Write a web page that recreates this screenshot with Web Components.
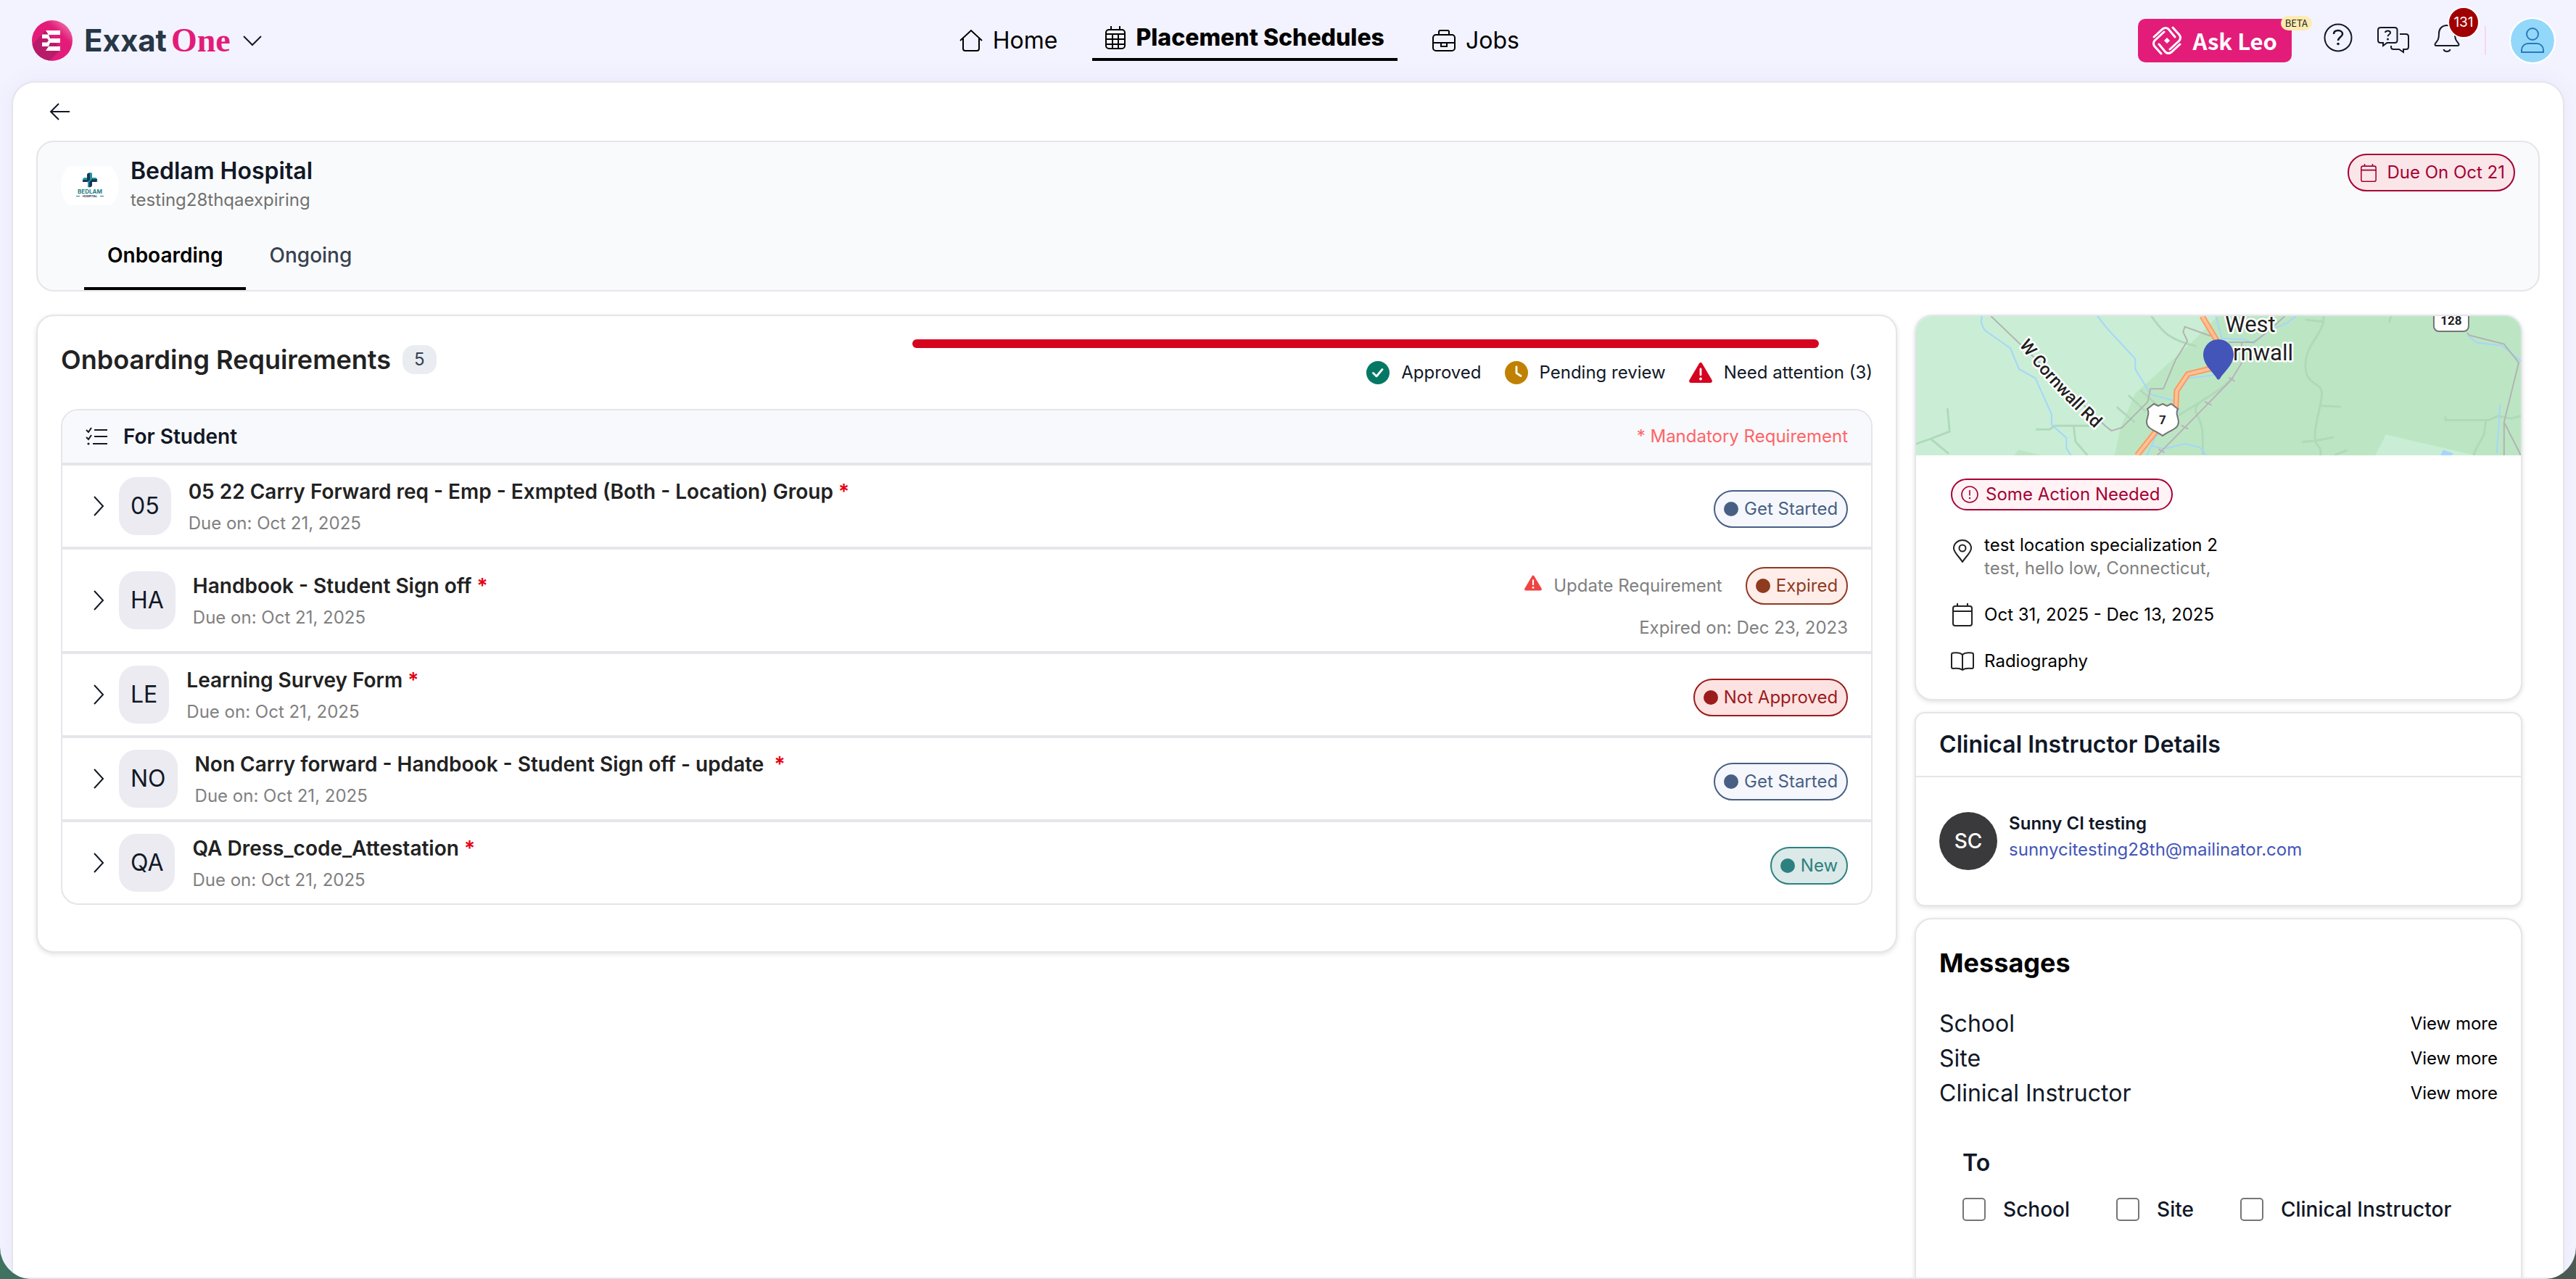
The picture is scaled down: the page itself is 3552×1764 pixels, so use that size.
<!DOCTYPE html>
<html lang="en">
<head>
<meta charset="utf-8">
<title>Exxat One - Placement Schedules</title>
<style>
  html, body {
    height: 100%;
  }

  body {
    margin: 0;
    overflow: hidden;
    background: linear-gradient(90deg, #3f7260 0%, #47705f 50%, #4d5a54 100%);
    color: #111827;
    font-family: Inter, "Liberation Sans", sans-serif;
    font-size: 24px;
    line-height: 32px;
    --line: #e5e5ea;
    --muted: #808080;
    --danger: #a50034;
    --brand: #e31c79;
  }
</style>
</head>
<body>
<exxat-app>
  <app-header slot="header"></app-header>
  <site-banner name="Bedlam Hospital" subtitle="testing28thqaexpiring" due="Due On Oct 21"></site-banner>
  <page-columns>
    <requirements-card slot="main" heading="Onboarding Requirements" count="5">
      <requirement-row initials="05" name="05 22 Carry Forward req - Emp - Exmpted (Both - Location) Group" due="Oct 21, 2025">
        <status-pill kind="start">Get Started</status-pill>
      </requirement-row>
      <requirement-row tall initials="HA" name="Handbook - Student Sign off" due="Oct 21, 2025" alert="Update Requirement" note="Expired on: Dec 23, 2023">
        <status-pill kind="expired">Expired</status-pill>
      </requirement-row>
      <requirement-row initials="LE" name="Learning Survey Form" due="Oct 21, 2025">
        <status-pill kind="rejected">Not Approved</status-pill>
      </requirement-row>
      <requirement-row initials="NO" name="Non Carry forward - Handbook - Student Sign off - update&nbsp;" due="Oct 21, 2025">
        <status-pill kind="start">Get Started</status-pill>
      </requirement-row>
      <requirement-row initials="QA" name="QA Dress_code_Attestation" due="Oct 21, 2025">
        <status-pill kind="new">New</status-pill>
      </requirement-row>
    </requirements-card>
    <location-card slot="side"></location-card>
    <instructor-card slot="side" initials="SC" name="Sunny CI testing" email="sunnycitesting28th@mailinator.com"></instructor-card>
    <messages-card slot="side"></messages-card>
  </page-columns>
</exxat-app>

<script>
const warning = (fill) => `
  <path fill="${fill}" stroke="none" d="M16 2c.9 0 1.600.4 2 1.200l13.600 23c.9 1.700-.2 3.800-2.200 3.800H2.600C.6 30-.5 27.900.4 26.200L14 3.200C14.400 2.400 15.100 2 16 2z"/>
  <path stroke="#fff" stroke-width="2.800" stroke-linecap="round" d="M16 11v8"/>
  <circle fill="#fff" stroke="none" cx="16" cy="24.500" r="1.900"/>`;

// [width, height, markup]
const ICONS = {
  home: [32, 32, `<path d="M1 16 16 2l15 14M5 13v14c0 2 1 3 3 3h16c2 0 3-1 3-3V13"/>`],
  schedule: [28, 32, `<rect x="1" y="5" width="26" height="26" rx="4"/><path d="M8 0v5M20 0v5M1 11h26M1 18h26M1 25h26M10 11v20M18 11v20"/>`],
  jobs: [32, 32, `<rect x="1" y="8" width="30" height="22" rx="4"/><path d="M9 8V4c0-1.500 1-2 2-2h10c1 0 2 .5 2 2v4M1 19h30M12 19v5h8v-5"/>`],
  chevronDown: [28, 16, `<path d="M2 2l12 12L26 2"/>`],
  chevronRight: [36, 28, `<path d="M12 1l12 13-12 13"/>`],
  back: [28, 24, `<path d="M13 1 2 12l11 11M2 12h26"/>`],
  leo: [40, 40, `<g stroke-width="3" stroke-linecap="round"><path d="M2 15 14 4q4-3 8 0l9 11M38 25 26 36q-4 3-8 0l-9-11M28 2l9 10q3 4 0 8L24 32M12 38 3 28q-3-4 0-8L16 8"/></g><path fill="currentColor" stroke="none" d="M20 16l4 4-4 4-4-4z"/>`],
  help: [40, 40, `<circle cx="20" cy="20" r="18.500"/><path stroke-width="2.500" d="M14 15c0-3.500 2.500-5 6-5s6 2 6 5c0 4-6 4-6 9"/><circle cx="20" cy="28.500" r="1.800" fill="currentColor" stroke="none"/>`],
  chat: [44, 44, `<path d="M4 8h20c2 0 3.500 1.500 3.500 3.500v14c0 2-1.500 3.500-3.500 3.500H13.500L8 33v-4H4.500C2.500 29 1 27.500 1 25.500v-14C1 9.500 2.500 8 4.500 8"/><path d="M31 17h8.500c2 0 3.500 1.500 3.500 3.500v14c0 2-1.500 3.500-3.500 3.500H36v4l-6-4h-7.500c-2 0-3.500-1.500-3.500-3.500V33"/><path d="M11 15c0-2 1.500-2.500 3.500-2.500s3.500 1 3.500 2.700c0 2.300-3.500 2.300-3.500 5"/><circle cx="14.500" cy="24" r="1.500" fill="currentColor" stroke="none"/>`],
  bell: [36, 40, `<path d="M18 3c-7 0-11 5-11 11 0 9-2 10-5 14-1 1.500-.5 3 1.500 3h29c2 0 2.500-1.500 1.500-3-3-4-5-5-5-14 0-6-4-11-11-11zM13.500 36c1 4 8 4 9 0"/>`],
  user: [32, 36, `<circle cx="16" cy="9" r="8"/><path d="M1 34v-3c0-5 4-9 9-9h12c5 0 9 4 9 9v3z"/>`],
  calendar: [28, 32, `<rect x="1" y="4" width="26" height="27" rx="3"/><path d="M7 0v4M21 0v4M1 11h26"/>`],
  checklist: [30, 26, `<path d="M1 4l3 3 4-6M1 14l3 3 4-6M12 4h18M12 13h18M10 23h20"/><circle cx="4" cy="23" r="1.600" fill="currentColor" stroke="none"/>`],
  alertCircle: [24, 24, `<g stroke-width="1.600"><circle cx="12" cy="12" r="11"/><path d="M12 6v7.500"/></g><circle cx="12" cy="17" r="1.200" fill="currentColor" stroke="none"/>`],
  pin: [26, 32, `<path d="M13 31C8 23 1 18 1 12a12 11 0 0 1 24 0c0 6-7 11-12 19z"/><circle cx="13" cy="12" r="4.500"/>`],
  book: [32, 26, `<path d="M16 4c-3-3-9-3-13-2.500C2 1.600 1 2.500 1 4v17c0 1.500 1 2 2 2 4-.5 9-1 13 2 4-3 9-2.500 13-2 1 0 2-.5 2-2V4c0-1.500-1-2.400-2-2.500C25 1 19 1 16 4zM16 4v21"/>`],
  approved: [32, 32, `<circle cx="16" cy="16" r="16" fill="#047864" stroke="none"/><path stroke="#fff" stroke-width="2.800" stroke-linecap="round" stroke-linejoin="round" d="M9.500 16.500l4.500 4.500 8-9.500"/>`],
  pending: [32, 32, `<circle cx="16" cy="16" r="16" fill="#c08000" stroke="none"/><path stroke="#fff" stroke-width="2.800" stroke-linecap="round" stroke-linejoin="round" d="M16 8v8.500l6 4"/>`],
  attention: [32, 32, warning("#d50520")],
  warning: [24, 24, `<g transform="scale(.75)">${warning("#ef4444")}</g>`]
};

function icon(name) {
  const [w, h, body] = ICONS[name];
  return `<svg class="icon" width="${w}" height="${h}" viewBox="0 0 ${w} ${h}" fill="none" stroke="currentColor" stroke-width="2" aria-hidden="true">${body}</svg>`;
}

const BASE = `
  *, :host {
    box-sizing: border-box;
  }
  h1, h2, h3, p, ul {
    margin: 0;
    padding: 0;
    list-style: none;
  }
  button {
    margin: 0;
    padding: 0;
    border: none;
    background: none;
    color: inherit;
    font: inherit;
    display: flex;
    align-items: center;
    justify-content: center;
  }
  svg {
    display: block;
    flex: none;
  }
`;

const CARD = `
  :host {
    display: block;
    border: 2px solid var(--line);
    border-radius: 24px;
    background: #fff;
    box-shadow: 0 2px 6px rgba(0, 0, 0, 0.12);
  }
`;

class BaseElement extends HTMLElement {
  constructor() {
    super();
    this.attachShadow({ mode: "open" });
  }

  connectedCallback() {
    this.shadowRoot.innerHTML = `<style>${BASE}${this.styles()}</style>${this.render()}`;
  }

  attr(name) {
    return this.getAttribute(name) || "";
  }
}

customElements.define("exxat-app", class extends BaseElement {
  styles() {
    return `
      :host {
        display: flex;
        flex-direction: column;
        height: 100vh;
        overflow: hidden;
        border-radius: 0 0 44px 44px;
        background: #f3f3ff;
      }
      main {
        flex: 1;
        min-height: 0;
        margin: 0 16px;
        padding: 0 32px;
        overflow: hidden;
        border: 2px solid var(--line);
        border-radius: 32px 32px 0 0;
        background: #fff;
        box-shadow: 0 0 30px rgba(90, 90, 200, 0.08);
      }
      .back {
        height: 80px;
        padding: 0 18px;
      }
    `;
  }

  render() {
    return `
      <slot name="header"></slot>
      <main>
        <button class="back" type="button" aria-label="Back">${icon("back")}</button>
        <slot></slot>
      </main>
    `;
  }
});

customElements.define("app-header", class extends BaseElement {
  styles() {
    return `
      :host {
        display: grid;
        grid-template-columns: 17fr auto 19fr;
        align-items: center;
        flex: none;
        height: 112px;
        padding: 0 30px 0 44px;
      }
      .brand {
        display: flex;
        align-items: center;
        gap: 16px;
      }
      .wordmark {
        display: flex;
        align-items: baseline;
        gap: 6px;
        color: #263746;
        font-size: 42px;
        font-weight: 700;
        line-height: 56px;
      }
      .wordmark b {
        color: var(--brand);
        font-family: "Liberation Serif", serif;
        font-size: 46px;
      }
      .actions, .tools {
        display: flex;
        align-items: center;
        justify-content: flex-end;
        gap: 34px;
      }
      .tools {
        padding-bottom: 8px;
      }
      .leo {
        position: relative;
        gap: 16px;
        height: 60px;
        margin-right: 10px;
        padding: 0 20px;
        border-radius: 10px;
        background: var(--brand);
        color: #fff;
        font-family: "Noto Sans CJK JP", "Noto Sans", sans-serif;
        font-size: 31px;
        font-weight: 700;
      }
      .beta {
        position: absolute;
        top: -4px;
        right: -28px;
        padding: 0 6px;
        border-radius: 10px;
        background: #fdebb0;
        color: #222;
        font-size: 13px;
        font-weight: 400;
        line-height: 20px;
      }
      .bell {
        position: relative;
      }
      .count {
        position: absolute;
        top: -23px;
        left: 19px;
        width: 44px;
        height: 44px;
        border: 2px solid #fff;
        border-radius: 50%;
        background: #a00000;
        color: #fff;
        font-size: 19px;
        line-height: 40px;
        text-align: center;
      }
      .divider {
        width: 2px;
        height: 40px;
        background: #f8d7ea;
      }
      .avatar {
        width: 60px;
        height: 60px;
        border-radius: 50%;
        outline: 2px solid #fff;
        background: #93d8fa;
        color: #2a7ab8;
      }
      nav {
        display: flex;
        align-items: center;
        gap: 30px;
      }
    `;
  }

  render() {
    return `
      <div class="brand">
        <svg width="56" height="56" viewBox="0 0 56 56" role="img" aria-label="Exxat">
          <defs>
            <linearGradient id="disc" x1="0.300" y1="0.700" x2="0.900" y2="0.050">
              <stop offset="0.600" stop-color="#e31c79"/>
              <stop offset="1" stop-color="#f07ab0"/>
            </linearGradient>
            <clipPath id="round"><circle cx="28" cy="28" r="28"/></clipPath>
          </defs>
          <g clip-path="url(#round)">
            <rect width="56" height="56" fill="url(#disc)"/>
            <path fill="#b81c68" d="M19 14 0 34v22h24l16-16-21-26z"/>
            <path fill="#fff" d="M19 14h20v6H23zM14 19.500h9l2 5.500h14v6H25l-2 5h-9v-5.500h7l2-3-2-2.500h-7zM23 36h16v6H19z"/>
          </g>
        </svg>
        <span class="wordmark">Exxat <b>One</b></span>
        <button type="button" aria-label="Switch product">${icon("chevronDown")}</button>
      </div>
      <nav>
        <nav-link icon="home">Home</nav-link>
        <nav-link icon="schedule" active>Placement Schedules</nav-link>
        <nav-link icon="jobs">Jobs</nav-link>
      </nav>
      <div class="actions">
        <button class="leo" type="button">${icon("leo")}<span>Ask Leo</span><span class="beta">BETA</span></button>
        <div class="tools">
          <button type="button" aria-label="Help">${icon("help")}</button>
          <button type="button" aria-label="Support chat">${icon("chat")}</button>
          <button class="bell" type="button" aria-label="Notifications">${icon("bell")}<span class="count">131</span></button>
        </div>
        <span class="divider"></span>
        <button class="avatar" type="button" aria-label="Profile">${icon("user")}</button>
      </div>
    `;
  }
});

customElements.define("nav-link", class extends BaseElement {
  styles() {
    return `
      :host {
        display: block;
      }
      a {
        display: flex;
        align-items: center;
        gap: 14px;
        height: 56px;
        padding: 0 18px;
        color: #000;
        font-size: 32px;
        text-decoration: none;
      }
      :host([active]) a {
        padding-bottom: 4px;
        border-bottom: 4px solid #000;
        font-weight: 800;
      }
    `;
  }

  render() {
    return `<a href="#">${icon(this.attr("icon"))}<slot></slot></a>`;
  }
});

customElements.define("status-pill", class extends BaseElement {
  styles() {
    return `
      :host {
        display: inline-flex;
        align-items: center;
        gap: 8px;
        height: 52px;
        padding: 0 12px;
        border: 2px solid;
        border-radius: 26px;
        white-space: nowrap;
      }
      :host::before {
        content: "";
        width: 20px;
        height: 20px;
        border-radius: 50%;
        background: currentColor;
      }
      :host([kind="start"]) {
        color: #485f84;
        background: #f5f7fc;
      }
      :host([kind="expired"]) {
        color: #8e3b1f;
        background: #ffedea;
      }
      :host([kind="rejected"]) {
        color: #9b1c1c;
        background: #fde2e2;
      }
      :host([kind="new"]) {
        color: #2c8180;
        background: #dbe9e8;
      }
      :host([kind="due"]) {
        gap: 14px;
        padding-left: 16px;
        color: var(--danger);
        background: #fae6e9;
      }
      :host([kind="action"]) {
        height: 44px;
        gap: 10px;
        padding: 0 16px 0 12px;
        color: var(--danger);
        background: #fff3f5;
      }
      :host([kind="due"])::before, :host([kind="action"])::before {
        display: none;
      }
      :host([kind="due"]) svg {
        width: 22px;
        height: 25px;
      }
    `;
  }

  render() {
    return `${this.attr("icon") ? icon(this.attr("icon")) : ""}<slot></slot>`;
  }
});

customElements.define("site-banner", class extends BaseElement {
  styles() {
    return `
      :host {
        display: block;
        border: 2px solid var(--line);
        border-radius: 24px;
        background: #f9fafb;
      }
      .top {
        display: flex;
        align-items: flex-start;
        justify-content: space-between;
        padding: 16px 32px 12px;
      }
      .site {
        display: flex;
        align-items: center;
        gap: 16px;
        padding-top: 4px;
      }
      h1 {
        font-size: 32px;
        font-weight: 600;
        line-height: 40px;
      }
      p {
        color: #717171;
        line-height: 40px;
      }
      .tabs {
        display: flex;
        padding: 0 64px;
      }
      .tabs button {
        height: 92px;
        padding: 0 32px;
        border-bottom: 4px solid transparent;
        color: #374151;
        font-size: 28px;
        font-weight: 500;
      }
      .tabs button[aria-selected="true"] {
        border-color: #000;
        color: #000;
        font-weight: 600;
      }
    `;
  }

  render() {
    return `
      <div class="top">
        <div class="site">
          <svg width="80" height="54" viewBox="0 0 80 54" role="img" aria-label="Bedlam Hospital logo">
            <clipPath id="crop"><circle cx="40" cy="27" r="40"/></clipPath>
            <rect width="80" height="54" fill="#fff" clip-path="url(#crop)"/>
            <path fill="#1b9a9c" d="M37 10q4-2 6 0v6h5q3 1 2 6h-7v5q-2 3-6 2v-7h-7q-1-5 2-6h5z"/>
            <path fill="#1d3557" d="M36 11q2-2 4-1v9l-4 3h-6q0-3 2-3h4zM43 18h7q0 3-2 4h-5v5q-2 3-4 2v-7z"/>
            <text x="40" y="38" text-anchor="middle" font-size="8" font-weight="700" fill="#1f8085">BEDLAM</text>
            <text x="40" y="43" text-anchor="middle" font-size="4" font-weight="700" fill="#1d3557">HOSPITAL</text>
            <path stroke="#1f8085" d="M21 41.500h5M54 41.500h5"/>
          </svg>
          <div>
            <h1>${this.attr("name")}</h1>
            <p>${this.attr("subtitle")}</p>
          </div>
        </div>
        <status-pill kind="due" icon="calendar">${this.attr("due")}</status-pill>
      </div>
      <div class="tabs" role="tablist">
        <button type="button" role="tab" aria-selected="true">Onboarding</button>
        <button type="button" role="tab" aria-selected="false">Ongoing</button>
      </div>
    `;
  }
});

customElements.define("page-columns", class extends BaseElement {
  styles() {
    return `
      :host {
        display: grid;
        grid-template-columns: 49fr 16fr;
        gap: 24px;
        align-items: start;
        padding: 32px 24px 0 0;
      }
      aside {
        display: flex;
        flex-direction: column;
        gap: 16px;
        min-width: 0;
      }
    `;
  }

  render() {
    return `
      <slot name="main"></slot>
      <aside><slot name="side"></slot></aside>
    `;
  }
});

customElements.define("requirements-card", class extends BaseElement {
  styles() {
    return CARD + `
      :host {
        padding: 32px 32px 64px;
      }
      header {
        display: flex;
        align-items: flex-start;
        justify-content: space-between;
        padding-bottom: 34px;
      }
      .title {
        display: flex;
        align-items: center;
        gap: 16px;
        padding-top: 8px;
      }
      h2 {
        color: #222;
        font-size: 36px;
        font-weight: 600;
        line-height: 40px;
      }
      .count {
        padding: 0 16px;
        border-radius: 16px;
        background: #e9edf2;
        color: #374151;
        line-height: 40px;
      }
      .stats {
        display: flex;
        flex-direction: column;
        gap: 18px;
        width: 53%;
      }
      .bar {
        height: 12px;
        margin-right: 74px;
        border-radius: 6px;
        background: #d50520;
      }
      .legend {
        display: flex;
        justify-content: flex-end;
        gap: 32px;
      }
      .legend li {
        display: flex;
        align-items: center;
        gap: 16px;
      }
      .list {
        overflow: hidden;
        border: 2px solid var(--line);
        border-radius: 24px;
      }
      .group {
        display: flex;
        align-items: center;
        gap: 22px;
        height: 72px;
        padding: 0 32px;
        background: #f8f9fc;
      }
      h3 {
        flex: 1;
        font-size: 28px;
        font-weight: 600;
      }
      .group p {
        color: #ff6467;
      }
    `;
  }

  render() {
    return `
      <header>
        <div class="title"><h2>${this.attr("heading")}</h2><span class="count">${this.attr("count")}</span></div>
        <div class="stats">
          <div class="bar"></div>
          <ul class="legend">
            <li>${icon("approved")}Approved</li>
            <li>${icon("pending")}Pending review</li>
            <li>${icon("attention")}Need attention (3)</li>
          </ul>
        </div>
      </header>
      <div class="list">
        <div class="group">${icon("checklist")}<h3>For Student</h3><p>* Mandatory Requirement</p></div>
        <slot></slot>
      </div>
    `;
  }
});

customElements.define("requirement-row", class extends BaseElement {
  styles() {
    return `
      :host {
        display: flex;
        align-items: center;
        height: 116px;
        padding: 0 32px;
        border-top: 4px solid var(--line);
      }
      :host([tall]) {
        height: 144px;
      }
      .initials {
        margin: 0 24px 0 10px;
        padding: 0 16px;
        border-radius: 24px;
        background: #ebebf1;
        font-size: 32px;
        line-height: 80px;
      }
      .text {
        flex: 1;
        padding-top: 4px;
        color: var(--muted);
        line-height: 44px;
      }
      h3 {
        color: #222;
        font-size: 28px;
        font-weight: 600;
      }
      h3 span {
        color: #e60012;
      }
      .status {
        display: flex;
        flex-direction: column;
        align-items: flex-end;
        gap: 16px;
        padding-top: 8px;
        color: var(--muted);
      }
      .line {
        display: flex;
        align-items: center;
      }
      .alert {
        display: flex;
        gap: 16px;
        margin-right: 32px;
      }
    `;
  }

  render() {
    const alert = this.attr("alert") ? `<span class="alert">${icon("warning")}${this.attr("alert")}</span>` : "";
    const note = this.attr("note") ? `<p>${this.attr("note")}</p>` : "";
    return `
      <button type="button" aria-label="Expand">${icon("chevronRight")}</button>
      <span class="initials">${this.attr("initials")}</span>
      <div class="text">
        <h3>${this.attr("name")} <span>*</span></h3>
        <p>Due on: ${this.attr("due")}</p>
      </div>
      <div class="status">
        <div class="line">${alert}<slot></slot></div>
        ${note}
      </div>
    `;
  }
});

customElements.define("location-card", class extends BaseElement {
  styles() {
    return CARD + `
      :host {
        overflow: hidden;
        color: #000;
      }
      .body {
        display: flex;
        flex-direction: column;
        align-items: flex-start;
        gap: 32px;
        padding: 32px 48px 36px;
      }
      .row {
        display: grid;
        grid-template-columns: 32px auto;
        align-items: center;
        justify-items: start;
        column-gap: 14px;
      }
      .row svg {
        justify-self: center;
        color: #222;
      }
      .row.place {
        align-items: start;
      }
      .place svg {
        margin-top: 8px;
      }
      .place p:last-child {
        color: var(--muted);
      }
    `;
  }

  render() {
    return `
      <site-map></site-map>
      <div class="body">
        <status-pill kind="action" icon="alertCircle">Some Action Needed</status-pill>
        <div class="row place">${icon("pin")}<div><p>test location specialization 2</p><p>test, hello low, Connecticut,</p></div></div>
        <div class="row">${icon("calendar")}<p>Oct 31, 2025 - Dec 13, 2025</p></div>
        <div class="row">${icon("book")}<p>Radiography</p></div>
      </div>
    `;
  }
});

customElements.define("site-map", class extends BaseElement {
  styles() {
    return `
      :host {
        display: block;
        height: 192px;
        background: #c9eed5;
      }
      svg {
        width: 100%;
        height: 100%;
      }
      .lines * {
        fill: none;
        vector-effect: non-scaling-stroke;
        stroke-linejoin: round;
      }
      .water { stroke: #a5d5fb; stroke-width: 2; }
      .minor { stroke: #b0d9ba; stroke-width: 3; }
      .trail { stroke: #b3b3b3; stroke-width: 2; }
      .rail { stroke: #b9b3ba; stroke-width: 2; }
      .road { stroke: #ff9a5c; stroke-width: 8; }
      .road.inner { stroke: #ffc19a; stroke-width: 4; }
      text {
        font-family: Roboto, sans-serif;
        fill: #1f1f1f;
      }
      .label {
        stroke: #fff;
        stroke-width: 5px;
        stroke-linejoin: round;
        paint-order: stroke;
      }
    `;
  }

  render() {
    return `
      <svg viewBox="0 0 834 192" preserveAspectRatio="xMidYMid slice" role="img" aria-label="Map of West Cornwall">
        <svg x="0" y="0" width="834" height="192" viewBox="39 44 1404 538" preserveAspectRatio="none">
          <path fill="#bce6c3" d="M740 44h703v538H500l14-110 34-130 60-90 70-105z"/>
          <path fill="#bce6c3" d="M278 560l52 22h-64z"/>
          <path fill="#c9eed5" d="M1130 502l206 80h-231z"/>
          <path fill="#a5d5fb" d="M1262 560l24 14-3 8h-26z"/>
          <g class="lines">
            <path class="minor" d="M112 400l5 90-44 28-34 20M73 518l42 58M317 482h32l12-14h92M405 468l4 60 28 54M585 44c20 40 30 90 105 116M532 350l40 62M505 395l42 60M560 330l40 60"/>
            <path class="minor" d="M985 44v22l-42-8M985 66c-8 60-42 90-42 170s40 60 38 110-16 110-16 160 16 30 13 76M975 390l50 4M935 530l30-4 44-14M1010 582l30-20M1268 432v14h100l22-16 30 10 23-10M1362 440l-4 60-20 60-5 22M1142 44l-5 25M775 280c-40 80-100 90-85 140s15 60 15 160M640 440c20-30 70-70 100-110"/>
            <path class="water" d="M192 44l-2 24 8 30 60 70 20 80 38 36 38 140v40l34 50v40l12 32M460 44l24 50 64 115v40l36 98 55 24M735 44l14 86 52 4 22 16 30-44 50-38 18-25M740 270l-70 14-28 70M1320 118l20 28 60 12 43 60M1395 385l-8 190M585 545l30 12 48-20 36 15 14 30M650 400l-10 50-45 60-20 72"/>
            <path class="trail" d="M213 44l266 425 14 18 24-12 60-100 6-50h30l28-110 28-75-10-35 4-20 60 36M765 145h58l36-46 36-55M1318 108l6 10 80 34 34 72-34 230 39 128M1404 455v127"/>
            <path class="rail" d="M795 145v80l-24 65-54 92-54 92-64 108M765 282l14 14M709 374l16 14M655 466l16 14M602 558l14 14"/>
            <path class="road" d="M703 44l40 110M740 240l-70 28-26 64-2 70-45 85-45 95"/>
            <path class="road inner" d="M703 44l40 110M740 240l-70 28-26 64-2 70-45 85-45 95"/>
          </g>
        </svg>
        <path id="street" fill="none" d="M142 40Q185 98 250 158"/>
        <text class="label" font-size="24" font-weight="500"><textPath href="#street">W Cornwall Rd</textPath></text>
        <text class="label" x="461" y="22" text-anchor="middle" font-size="31">West</text>
        <text class="label" x="520" y="61" text-anchor="end" font-size="31">rnwall</text>
        <path fill="#4355b9" d="M415 86.500C411 78 396 68 396 53a21 21 0 0 1 42 0c0 15-15 25-19 33.500q-2 2-4 0z"/>
        <path fill="#fff" stroke="#757575" stroke-width="2" d="M340 121l6 3 6-3 9 7c-4 6 1 12 1 18 0 10-12 11-22 19-10-8-22-9-22-19 0-6 5-12 1-18l9-7 6 3z"/>
        <text x="340" y="149" text-anchor="middle" font-size="17" font-weight="700">7</text>
        <rect x="714" y="-16" width="48" height="37" rx="7" fill="#fff" stroke="#757575" stroke-width="2"/>
        <text x="738" y="12" text-anchor="middle" font-size="17" font-weight="700">128</text>
      </svg>
    `;
  }
});

customElements.define("instructor-card", class extends BaseElement {
  styles() {
    return CARD + `
      :host {
        border-radius: 14px;
      }
      h2 {
        padding: 0 32px;
        border-bottom: 2px solid var(--line);
        font-size: 32px;
        font-weight: 600;
        line-height: 86px;
      }
      .person {
        display: flex;
        align-items: center;
        gap: 16px;
        padding: 46px 32px;
      }
      .avatar {
        width: 80px;
        border-radius: 50%;
        background: #3a3a3c;
        color: #fff;
        font-size: 28px;
        font-weight: 500;
        line-height: 80px;
        text-align: center;
      }
      .info {
        padding-bottom: 12px;
        line-height: 36px;
      }
      .info p {
        font-weight: 600;
      }
      a {
        color: #4355b9;
        text-decoration: none;
      }
    `;
  }

  render() {
    return `
      <h2>Clinical Instructor Details</h2>
      <div class="person">
        <span class="avatar">${this.attr("initials")}</span>
        <div class="info">
          <p>${this.attr("name")}</p>
          <a href="mailto:${this.attr("email")}">${this.attr("email")}</a>
        </div>
      </div>
    `;
  }
});

customElements.define("messages-card", class extends BaseElement {
  styles() {
    return CARD + `
      :host {
        padding: 36px 32px 160px;
      }
      h2 {
        margin-bottom: 36px;
        color: #000;
        font-size: 36px;
        font-weight: 700;
        line-height: 48px;
      }
      li {
        display: flex;
        justify-content: space-between;
        height: 48px;
        font-size: 32px;
        line-height: 48px;
      }
      li button {
        color: #000;
        font-size: 24px;
      }
      fieldset {
        margin: 48px 0 0;
        padding: 0 32px;
        border: none;
      }
      legend {
        margin-bottom: 20px;
        padding: 0;
        font-size: 32px;
        font-weight: 600;
        line-height: 48px;
      }
      .options {
        display: flex;
        gap: 64px;
        font-size: 28px;
        font-weight: 500;
        line-height: 40px;
      }
      label {
        display: flex;
        align-items: center;
        gap: 24px;
      }
      input {
        appearance: none;
        width: 32px;
        height: 32px;
        margin: 0;
        border: 2px solid #767676;
        border-radius: 5px;
        background: #fff;
      }
      input:checked {
        background: #4355b9;
      }
    `;
  }

  render() {
    const groups = ["School", "Site", "Clinical Instructor"];
    return `
      <h2>Messages</h2>
      <ul>${groups.map((g) => `<li>${g}<button type="button">View more</button></li>`).join("")}</ul>
      <fieldset>
        <legend>To</legend>
        <div class="options">
          ${groups.map((g) => `<label><input type="checkbox">${g}</label>`).join("")}
        </div>
      </fieldset>
    `;
  }
});
</script>
</body>
</html>
